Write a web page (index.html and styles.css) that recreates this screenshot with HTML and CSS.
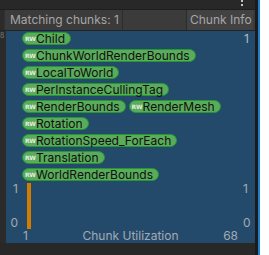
FILE: index.html
```html
<!DOCTYPE html>
<html lang="en">
<head>
  <title>Chunk Info</title>
  <meta charset="UTF-8">
  <meta name="viewport" content="width=device-width, initial-scale=1">
  <link rel="stylesheet" href="styles.css">
</head>
<body>
  <div class="screen">
    <div class="window">
      <div class="toolbar">
        <svg class="menu-dots" width="4" height="8" viewBox="0 0 4 8">
          <rect x="1" y="0" width="2" height="2" fill="#c4c4c4"/>
          <rect x="1" y="4" width="2" height="2" fill="#c4c4c4"/>
        </svg>
      </div>
      <div class="header">
        <div class="gutter"></div>
        <div class="cell match">Matching chunks: 1</div>
        <div class="cell spacer"></div>
        <div class="cell info">Chunk Info</div>
      </div>
      <div class="content">
        <div class="gutter"><span class="cut">8</span></div>
        <div class="panel">
          <div class="top">
            <div class="tags">
              <div class="tag-row"><span class="tag"><span class="rw">RW</span>Child</span></div>
              <div class="tag-row"><span class="tag"><span class="rw">RW</span>ChunkWorldRenderBounds</span></div>
              <div class="tag-row"><span class="tag"><span class="rw">RW</span>LocalToWorld</span></div>
              <div class="tag-row"><span class="tag"><span class="rw">RW</span>PerInstanceCullingTag</span></div>
              <div class="tag-row">
                <span class="tag"><span class="rw">RW</span>RenderBounds</span>
                <span class="tag"><span class="rw">RW</span>RenderMesh</span>
              </div>
              <div class="tag-row"><span class="tag"><span class="rw">RW</span>Rotation</span></div>
              <div class="tag-row"><span class="tag"><span class="rw">RW</span>RotationSpeed_ForEach</span></div>
              <div class="tag-row"><span class="tag"><span class="rw">RW</span>Translation</span></div>
              <div class="tag-row"><span class="tag"><span class="rw">RW</span>WorldRenderBounds</span></div>
            </div>
            <div class="count">1</div>
          </div>
          <div class="chart">
            <div class="axis axis-left"><span>1</span><span>0</span></div>
            <div class="plot"><div class="bar"></div></div>
            <div class="axis axis-right"><span>1</span><span>0</span></div>
          </div>
          <div class="x-axis">
            <span class="x-min">1</span>
            <span class="x-title">Chunk Utilization</span>
            <span class="x-max">68</span>
          </div>
        </div>
      </div>
      <div class="footer"></div>
    </div>
    <div class="edge"></div>
    <div class="accent"></div>
    <div class="blank"></div>
  </div>
</body>
</html>
```

FILE: styles.css
```css
body {
  margin: 0;
  padding: 0;
  background-color: #fff;
  font-family: Inter, "Noto Sans", sans-serif;
  font-size: 12px;
}

.screen {
  display: flex;
  height: 255px;
  overflow: hidden;
}

.window {
  width: 255px;
  display: flex;
  flex-direction: column;
  background-color: #2a2a2a;
}

.toolbar {
  height: 9px;
  background-color: #282828;
  border-bottom: 1px solid #1e1e1e;
  display: flex;
  justify-content: flex-end;
  padding-right: 11px;
}

.menu-dots {
  display: block;
}

.header {
  height: 20px;
  display: flex;
  border-bottom: 1px solid #232323;
  background-color: #3b3b3b;
  padding-right: 2px;
}

.header .gutter {
  width: 4px;
  background-color: #2b2b2b;
  border-right: 1px solid #303030;
}

.cell {
  color: #a6a6a6;
  line-height: 20px;
  white-space: nowrap;
}

.match {
  width: 112px;
  padding-left: 5px;
  border-right: 1px solid #2c2c2c;
}

.spacer {
  flex: 1;
  border-right: 1px solid #2c2c2c;
}

.info {
  width: 63px;
  padding-left: 3px;
  background-color: #424242;
}

.content {
  height: 212px;
  display: flex;
}

.content .gutter {
  width: 6px;
  background-color: #2b2b2b;
}

.cut {
  display: block;
  color: #7a7a7a;
  font-size: 7px;
  line-height: 8px;
  padding-top: 1px;
}

.panel {
  flex: 1;
  background-color: #244a6b;
  padding-top: 1px;
}

.top {
  display: flex;
  padding-left: 16px;
  padding-right: 6px;
}

.tags {
  flex: 1;
  display: flex;
  flex-direction: column;
  gap: 4px;
}

.tag-row {
  display: flex;
  gap: 3px;
}

.tag {
  display: flex;
  align-items: center;
  height: 11px;
  padding: 0 5px 0 2px;
  border: 1px solid #22992f;
  border-radius: 7px;
  background-color: #5aab5b;
  color: #101010;
  font-size: 12px;
  line-height: 11px;
  white-space: nowrap;
}

.rw {
  width: 9px;
  margin-right: 2px;
  color: #e2eee2;
  font-family: "DejaVu Sans", sans-serif;
  font-size: 6px;
  font-weight: bold;
  line-height: 6px;
  letter-spacing: -0.3px;
}

.count {
  color: #b4bcc4;
  line-height: 14px;
}

.chart {
  display: flex;
  height: 48px;
  margin-top: 1px;
}

.axis {
  display: flex;
  flex-direction: column;
  justify-content: space-between;
  color: #a2aab2;
  line-height: 14px;
}

.axis-left {
  width: 12px;
  padding-right: 9px;
  text-align: right;
}

.axis-right {
  width: 12px;
  padding-left: 3px;
}

.plot {
  flex: 1;
  padding-top: 1px;
  padding-bottom: 1px;
}

.bar {
  width: 4px;
  height: 100%;
  background-color: #d27c00;
}

.x-axis {
  display: grid;
  grid-template-columns: 1fr auto 1fr;
  margin-top: -1px;
  padding: 0 17px;
  color: #a2aab2;
  line-height: 14px;
}

.x-max {
  text-align: right;
}

.footer {
  flex: 1;
  background-color: #282828;
}

.edge {
  width: 3px;
  background-color: #1b1b1b;
}

.accent {
  width: 2px;
  background-color: #1e7fd0;
}

.blank {
  flex: 1;
  background-color: #fff;
}
```
